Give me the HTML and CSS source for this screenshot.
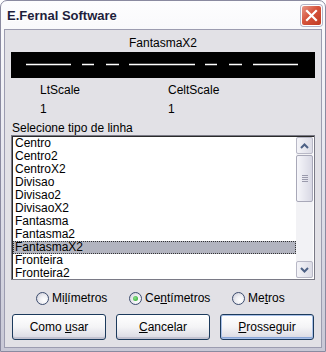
FILE: index.html
```html
<!DOCTYPE html>
<html lang="pt-BR">
<head>
    <meta charset="UTF-8">
    <title>E.Fernal Software</title>
    <link rel="stylesheet" href="styles.css">
</head>
<body>
    <div class="window">
        <div class="titlebar">
            <span class="title">E.Fernal Software</span>
            <span class="close-btn">
                <svg width="13" height="13" viewBox="0 0 13 13">
                    <path d="M2 2 L11 11 M11 2 L2 11" stroke="#fff" stroke-width="2.2" stroke-linecap="square"/>
                </svg>
            </span>
        </div>

        <div class="client">
            <div class="preview-name">FantasmaX2</div>
            <div class="preview-bar">
                <svg width="304" height="26" viewBox="0 0 304 26">
                    <g stroke="#fff" stroke-width="1.5">
                        <line x1="15" y1="12.5" x2="60" y2="12.5"/>
                        <line x1="71" y1="12.5" x2="83" y2="12.5"/>
                        <line x1="95" y1="12.5" x2="108" y2="12.5"/>
                        <line x1="118" y1="12.5" x2="184" y2="12.5"/>
                        <line x1="194" y1="12.5" x2="206" y2="12.5"/>
                        <line x1="218" y1="12.5" x2="231" y2="12.5"/>
                        <line x1="242" y1="12.5" x2="287" y2="12.5"/>
                    </g>
                </svg>
            </div>

            <div class="scales">
                <div class="scale">
                    <div>LtScale</div>
                    <div class="scale-value">1</div>
                </div>
                <div class="scale">
                    <div>CeltScale</div>
                    <div class="scale-value">1</div>
                </div>
            </div>

            <div class="list-label">Selecione tipo de linha</div>
            <div class="listbox">
                <ul class="items">
                    <li>Centro</li>
                    <li>Centro2</li>
                    <li>CentroX2</li>
                    <li>Divisao</li>
                    <li>Divisao2</li>
                    <li>DivisaoX2</li>
                    <li>Fantasma</li>
                    <li>Fantasma2</li>
                    <li class="selected">FantasmaX2</li>
                    <li>Fronteira</li>
                    <li>Fronteira2</li>
                </ul>
                <div class="scrollbar">
                    <div class="sb-btn">
                        <svg width="9" height="6" viewBox="0 0 9 6"><path d="M1 5 L4.5 1.5 L8 5" fill="none" stroke="#4d6185" stroke-width="2"/></svg>
                    </div>
                    <div class="sb-thumb">
                        <span class="grip"></span>
                    </div>
                    <div class="sb-track"></div>
                    <div class="sb-btn">
                        <svg width="9" height="6" viewBox="0 0 9 6"><path d="M1 1 L4.5 4.5 L8 1" fill="none" stroke="#4d6185" stroke-width="2"/></svg>
                    </div>
                </div>
            </div>

            <div class="units">
                <label class="radio mm"><span class="dot"></span><span>Mi<u>l</u>ímetros</span></label>
                <label class="radio cm"><span class="dot checked"></span><span>Ce<u>n</u>tímetros</span></label>
                <label class="radio"><span class="dot"></span><span>Me<u>t</u>ros</span></label>
            </div>

            <div class="buttons">
                <button class="btn">Como <u>u</u>sar</button>
                <button class="btn"><u>C</u>ancelar</button>
                <button class="btn default"><u>P</u>rosseguir</button>
            </div>
        </div>
    </div>
</body>
</html>
```

FILE: styles.css
```css
* {
    margin: 0;
    padding: 0;
    box-sizing: border-box;
}

body {
    font-family: "Liberation Sans", Arial, sans-serif;
    font-size: 12px;
    color: #000;
    background: #fff;
}

.window {
    width: 326px;
    height: 352px;
    display: flex;
    flex-direction: column;
    border: 1px solid #8a8aa0;
    border-radius: 7px 7px 0 0;
    background: linear-gradient(#fdfdfe 0%, #e6e6ee 45%, #c8c8d6 100%);
}

.titlebar {
    height: 28px;
    display: flex;
    align-items: center;
    justify-content: space-between;
    padding: 0 3px 0 6px;
}

.title {
    font-weight: bold;
    font-size: 13px;
    color: #1e1e3c;
    text-shadow: 1px 1px 0 #fff;
}

.close-btn {
    width: 21px;
    height: 21px;
    display: flex;
    align-items: center;
    justify-content: center;
    border: 1px solid #fff;
    border-radius: 3px;
    background: linear-gradient(135deg, #e8998a 0%, #d6533c 45%, #c03a22 100%);
    box-shadow: 0 0 0 1px #b4b4c8;
}

.client {
    flex: 1;
    margin: 0 3px 3px 3px;
    border: 1px solid #9c9cb0;
    background: #e2e1e6;
    padding: 5px 6px 0 6px;
}

.preview-name {
    text-align: center;
    line-height: 13px;
    height: 15px;
    padding-top: 2px;
}

.preview-bar {
    height: 26px;
    margin-top: 2px;
    background: #000;
    display: flex;
}

.scales {
    display: flex;
    padding-left: 29px;
    margin-top: 6px;
}

.scale {
    width: 128px;
    line-height: 13px;
}

.scale-value {
    margin-top: 6px;
}

.list-label {
    margin-top: 6px;
    line-height: 13px;
    padding-left: 1px;
}

.listbox {
    height: 145px;
    display: flex;
    background: #fff;
    border: 1px solid #7a7a86;
    box-shadow: inset 1px 1px 0 #2a2a2a;
    padding: 1px;
}

.items {
    list-style: none;
    flex: 1;
}

.items li {
    line-height: 13px;
    height: 13px;
    padding-left: 2px;
}

.items li.selected {
    background: #b2b4bf;
    outline: 1px dotted #333;
    outline-offset: -1px;
}

.scrollbar {
    width: 17px;
    display: flex;
    flex-direction: column;
    background: #f2f2f5;
}

.sb-btn {
    height: 17px;
    display: flex;
    align-items: center;
    justify-content: center;
    border: 1px solid #b8b8c6;
    border-radius: 2px;
    background: linear-gradient(90deg, #f4f4f8, #dcdce6);
}

.sb-thumb {
    height: 47px;
    margin-top: 1px;
    display: flex;
    align-items: center;
    justify-content: center;
    border: 1px solid #a8a8b8;
    border-radius: 2px;
    background: linear-gradient(90deg, #f6f6fa, #d8d8e4);
}

.grip {
    width: 6px;
    height: 7px;
    background: repeating-linear-gradient(#9a9aac 0 1px, transparent 1px 2px);
}

.sb-track {
    flex: 1;
}

.units {
    display: flex;
    height: 18px;
    align-items: center;
    margin-top: 9px;
    padding-left: 25px;
}

.radio {
    display: flex;
    align-items: center;
    gap: 3px;
    line-height: 13px;
}

.radio.mm {
    width: 93px;
}

.radio.cm {
    width: 103px;
}

.dot {
    width: 13px;
    height: 13px;
    border-radius: 50%;
    border: 1px solid #3c4c6e;
    background: radial-gradient(circle at 65% 65%, #ffffff 0%, #f0f0f4 40%, #c8c8d4 100%);
    display: flex;
    align-items: center;
    justify-content: center;
}

.dot.checked::after {
    content: "";
    width: 5px;
    height: 5px;
    border-radius: 50%;
    background: radial-gradient(circle at 40% 40%, #8de08d, #21a121);
}

.buttons {
    display: flex;
    gap: 10px;
    margin-top: 7px;
    padding-left: 1px;
}

.btn {
    width: 94px;
    height: 26px;
    font-family: "Liberation Sans", Arial, sans-serif;
    font-size: 12px;
    color: #000;
    border: 1px solid #1c3a5c;
    border-radius: 3px;
    background: linear-gradient(#ffffff 0%, #f4f4f6 50%, #d8d8e2 100%);
    box-shadow: inset 0 -2px 0 #c2c2d0;
}

.btn.default {
    box-shadow: inset 0 0 0 1px #a8c0e8, inset 0 -2px 0 #8aa6d8;
}
```
